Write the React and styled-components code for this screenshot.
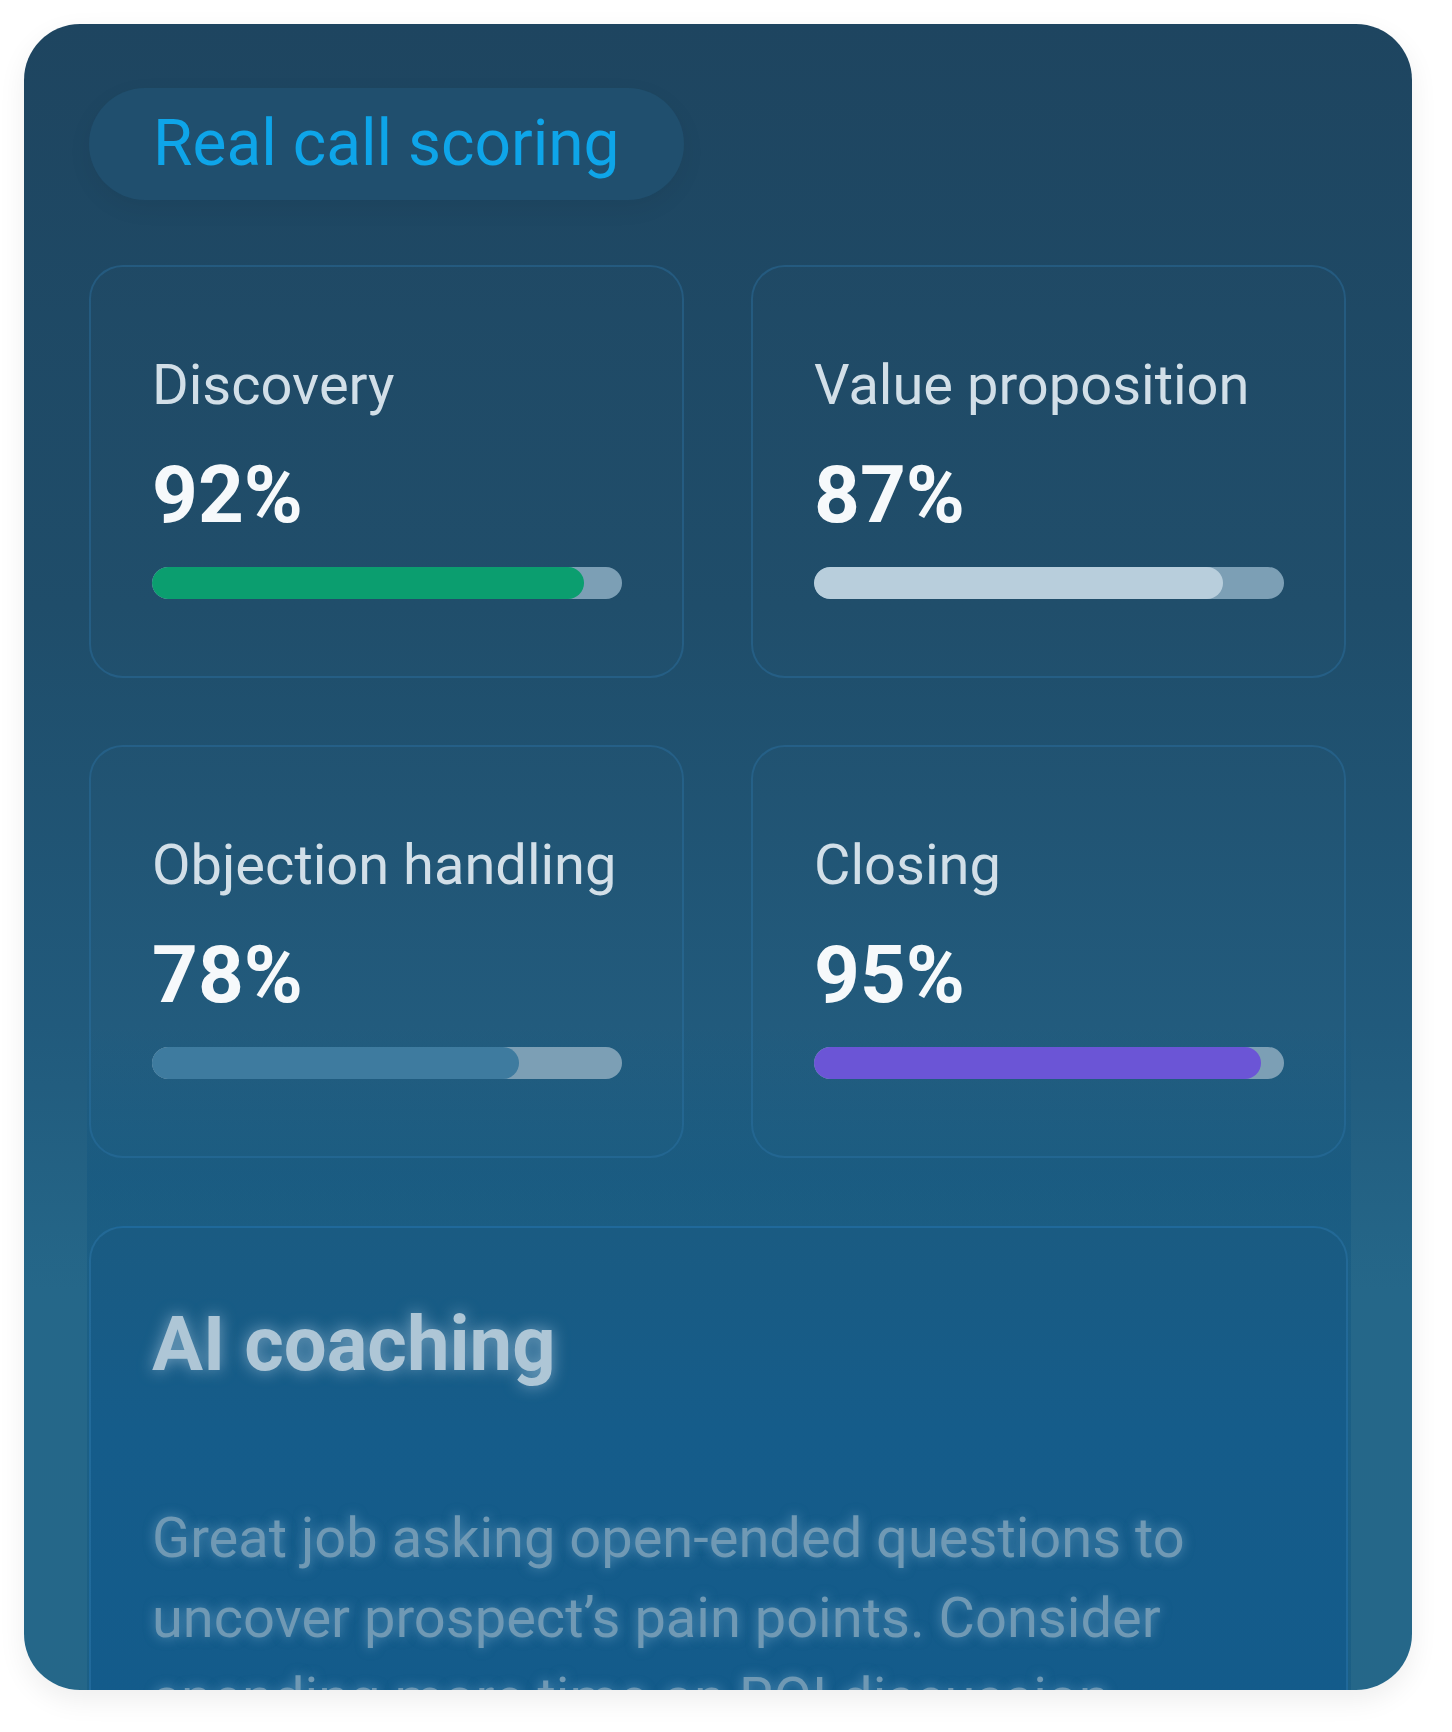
import React from 'react'
import styled, { createGlobalStyle } from 'styled-components'

const scores = [
  { label: 'Discovery', value: 92, fill: '#0b9e6f' },
  { label: 'Value proposition', value: 87, fill: '#b8cedc' },
  { label: 'Objection handling', value: 78, fill: '#3e7b9f' },
  { label: 'Closing', value: 95, fill: '#6b55d6' },
]

const App = () => {
  return (
    <S.Page>
      <GlobalStyle />
      <S.Card>
        <S.Content>
          <S.Pill>Real call scoring</S.Pill>
          <S.Grid>
            {scores.map((s) => (
              <S.Stat key={s.label}>
                <S.Label>{s.label}</S.Label>
                <S.Value>{s.value}%</S.Value>
                <S.Track>
                  <S.Fill $color={s.fill} style={{ width: `${s.value}%` }} />
                </S.Track>
              </S.Stat>
            ))}
          </S.Grid>
          <S.Coaching>
            <S.CoachTitle>AI coaching</S.CoachTitle>
            <S.CoachText>
              Great job asking open-ended questions to uncover prospect’s pain
              points. Consider spending more time on ROI discussion.
            </S.CoachText>
          </S.Coaching>
        </S.Content>
      </S.Card>
    </S.Page>
  )
}

const GlobalStyle = createGlobalStyle`
  body {
    margin: 0;
    background: #ffffff;
    font-family: Roboto, "Noto Sans", sans-serif;
  }
`

const S = {
  Page: styled.div`
    padding: 24px 40px 42px 24px;
  `,
  Card: styled.div`
    width: 1388px;
    height: 1666px;
    border-radius: 56px;
    overflow: hidden;
    background: linear-gradient(
      to bottom,
      #1e4560 0%,
      #1f4d6a 35%,
      #215a7c 60%,
      #256789 76%,
      #256789 100%
    );
    box-shadow: 0 10px 28px rgba(0, 0, 0, 0.07);
  `,
  Content: styled.div`
    margin: 0 61px 0 63px;
    padding: 64px 2px 0 2px;
    height: 100%;
    box-sizing: border-box;
    display: flex;
    flex-direction: column;
    align-items: flex-start;
    background: linear-gradient(
      to bottom,
      rgba(10, 80, 125, 0) 0px,
      rgba(10, 80, 125, 0) 1000px,
      rgba(10, 80, 125, 0.34) 1150px
    );
  `,
  Pill: styled.div`
    height: 112px;
    line-height: 112px;
    padding: 0 64px;
    border-radius: 56px;
    background: #204f6e;
    box-shadow: 0 8px 24px rgba(0, 0, 0, 0.06);
    color: #0ea5e9;
    font-size: 64px;
    font-weight: 400;
    white-space: nowrap;
  `,
  Grid: styled.div`
    margin-top: 65px;
    display: grid;
    grid-template-columns: 595px 595px;
    column-gap: 67px;
    row-gap: 67px;
  `,
  Stat: styled.div`
    box-sizing: border-box;
    height: 413px;
    border: 2px solid rgba(44, 118, 172, 0.38);
    border-radius: 34px;
    padding: 85px 60px 0 61px;
    display: flex;
    flex-direction: column;
    gap: 24px;
    background: rgba(255, 255, 255, 0.008);
  `,
  Label: styled.div`
    color: #d2dfe8;
    font-size: 56px;
    line-height: 1.2;
    white-space: nowrap;
    margin-bottom: 4px;
  `,
  Value: styled.div`
    color: #f6f9fb;
    font-size: 80px;
    font-weight: 700;
    line-height: 1.2;
  `,
  Track: styled.div`
    height: 32px;
    border-radius: 16px;
    background: #7c9fb5;
    overflow: hidden;
  `,
  Fill: styled.div`
    height: 100%;
    border-radius: 16px;
    background: ${(p) => p.$color};
  `,
  Coaching: styled.div`
    margin-top: 68px;
    box-sizing: border-box;
    width: 1259px;
    flex: 1;
    border: 2px solid rgba(52, 128, 180, 0.4);
    border-bottom: none;
    border-radius: 34px 34px 0 0;
    padding: 71px 60px 0 61px;
    background: linear-gradient(to bottom, #1a5b82 0%, #155c8a 40%, #135b8b 100%);
  `,
  CoachTitle: styled.div`
    color: #aec6d6;
    font-size: 76px;
    font-weight: 700;
    line-height: 1.2;
    text-shadow: 0 0 16px rgba(190, 215, 235, 0.6);
  `,
  CoachText: styled.p`
    margin: 108px 0 0 0;
    color: #7099b4;
    font-size: 56px;
    line-height: 80px;
    text-shadow: 0 0 12px rgba(150, 195, 225, 0.55);
  `,
}

export default App
